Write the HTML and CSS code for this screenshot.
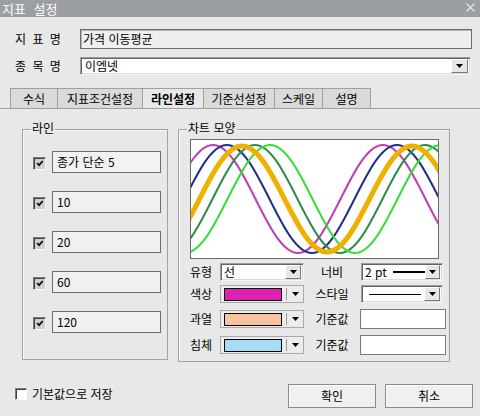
FILE: index.html
```html
<!DOCTYPE html>
<html lang="ko">
<head>
<meta charset="utf-8">
<title>지표 설정</title>
<link rel="stylesheet" href="styles.css">
</head>
<body>
<div class="titlebar">
  <span class="title">지표 설정</span>
  <svg class="close" width="9" height="9" viewBox="0 0 9 9"><path d="M0.5 0.5L8.5 8.5M8.5 0.5L0.5 8.5" stroke="#e8e8e8" stroke-width="1.1" fill="none"/></svg>
</div>

<div class="row r1">
  <span class="lbl">지 표 명</span>
  <div class="field">가격 이동평균</div>
</div>
<div class="row r2">
  <span class="lbl">종 목 명</span>
  <div class="combo wide">
    <span class="ctext">이엠넷</span>
    <span class="dbtn"><svg width="7" height="4" viewBox="0 0 7 4"><path d="M0 0H7L3.5 4Z" fill="#000"/></svg></span>
  </div>
</div>

<div class="tabs">
  <div class="tab t1">수식</div>
  <div class="tab t2">지표조건설정</div>
  <div class="tab t3 active">라인설정</div>
  <div class="tab t4">기준선설정</div>
  <div class="tab t5">스케일</div>
  <div class="tab t6">설명</div>
</div>

<div class="panels">
  <div class="group gleft">
    <div class="gtitle">라인</div>
    <div class="lines">
      <div class="lrow"><span class="cb checked"><svg width="11" height="11" viewBox="0 0 11 11"><path d="M2.5 5L4.5 7.5L8.5 2.8" stroke="#000" stroke-width="1.8" fill="none"/></svg></span><div class="tb sel">종가 단순 5</div></div>
      <div class="lrow"><span class="cb checked"><svg width="11" height="11" viewBox="0 0 11 11"><path d="M2.5 5L4.5 7.5L8.5 2.8" stroke="#000" stroke-width="1.8" fill="none"/></svg></span><div class="tb">10</div></div>
      <div class="lrow"><span class="cb checked"><svg width="11" height="11" viewBox="0 0 11 11"><path d="M2.5 5L4.5 7.5L8.5 2.8" stroke="#000" stroke-width="1.8" fill="none"/></svg></span><div class="tb">20</div></div>
      <div class="lrow"><span class="cb checked"><svg width="11" height="11" viewBox="0 0 11 11"><path d="M2.5 5L4.5 7.5L8.5 2.8" stroke="#000" stroke-width="1.8" fill="none"/></svg></span><div class="tb">60</div></div>
      <div class="lrow"><span class="cb checked"><svg width="11" height="11" viewBox="0 0 11 11"><path d="M2.5 5L4.5 7.5L8.5 2.8" stroke="#000" stroke-width="1.8" fill="none"/></svg></span><div class="tb">120</div></div>
    </div>
  </div>

  <div class="group gright">
    <div class="gtitle">차트 모양</div>
    <div class="chart">
      <svg width="247" height="118" viewBox="0 0 247 118">
        <g fill="none" stroke-linecap="butt">
          <path stroke="#c23bb3" stroke-width="2" d="M -148 5 C -117 5 -94 113 -63 113 S -9 5 22 5 S 76 113 107 113 S 161 5 192 5 S 246 113 277 113"/>
          <path stroke="#1f2d8c" stroke-width="2" d="M -134 5 C -103 5 -80 113 -49 113 S 5 5 36 5 S 90 113 121 113 S 175 5 206 5 S 260 113 291 113"/>
          <path stroke="#2e8b4e" stroke-width="2" d="M -106 5 C -75 5 -52 113 -21 113 S 33 5 64 5 S 118 113 149 113 S 203 5 234 5 S 288 113 319 113"/>
          <path stroke="#36dd36" stroke-width="2" d="M -91 5 C -60 5 -37 113 -6 113 S 48 5 79 5 S 133 113 164 113 S 218 5 249 5 S 303 113 334 113"/>
          <path stroke="#f0b000" stroke-width="5" d="M -119 6 C -88 6 -65 112 -34 112 S 20 6 51 6 S 105 112 136 112 S 190 6 221 6 S 275 112 306 112"/>
        </g>
      </svg>
    </div>
    <div class="props">
      <span class="plbl">유형</span>
      <div class="combo c84"><span class="ctext">선</span><span class="dbtn"><svg width="7" height="4" viewBox="0 0 7 4"><path d="M0 0H7L3.5 4Z" fill="#000"/></svg></span></div>
      <span class="plbl2">너비</span>
      <div class="combo c82"><span class="ctext">2 pt</span><span class="sline thick"></span><span class="dbtn"><svg width="7" height="4" viewBox="0 0 7 4"><path d="M0 0H7L3.5 4Z" fill="#000"/></svg></span></div>

      <span class="plbl">색상</span>
      <div class="ccombo"><span class="swatch" style="background:#dd1fb2"></span><span class="sep"></span><svg width="7" height="4" viewBox="0 0 7 4"><path d="M0 0H7L3.5 4Z" fill="#000"/></svg></div>
      <span class="plbl2">스타일</span>
      <div class="combo c82"><span class="sline thin"></span><span class="dbtn"><svg width="7" height="4" viewBox="0 0 7 4"><path d="M0 0H7L3.5 4Z" fill="#000"/></svg></span></div>

      <span class="plbl">과열</span>
      <div class="ccombo"><span class="swatch" style="background:#f8c4a0"></span><span class="sep"></span><svg width="7" height="4" viewBox="0 0 7 4"><path d="M0 0H7L3.5 4Z" fill="#000"/></svg></div>
      <span class="plbl2">기준값</span>
      <div class="input"></div>

      <span class="plbl">침체</span>
      <div class="ccombo"><span class="swatch" style="background:#a8dcf4"></span><span class="sep"></span><svg width="7" height="4" viewBox="0 0 7 4"><path d="M0 0H7L3.5 4Z" fill="#000"/></svg></div>
      <span class="plbl2">기준값</span>
      <div class="input"></div>
    </div>
  </div>
</div>

<div class="footer">
  <span class="cb white"></span>
  <span class="flabel">기본값으로 저장</span>
  <button class="btn ok">확인</button>
  <button class="btn cancel">취소</button>
</div>
</body>
</html>
```

FILE: styles.css
```css
html, body {
  margin: 0;
  padding: 0;
}
body {
  width: 480px;
  height: 416px;
  overflow: hidden;
  background: #e8e8e8;
  color: #000;
  font-family: "Noto Sans CJK KR", "Liberation Sans", sans-serif;
  font-size: 12px;
  line-height: 14px;
}

/* title bar */
.titlebar {
  height: 17px;
  background: #9b9ea2;
  color: #fff;
  display: flex;
  justify-content: space-between;
  align-items: flex-start;
  padding: 0 5px 0 2px;
  font-size: 13px;
  line-height: 17px;
}
.title {
  word-spacing: 4px;
}
.close {
  margin-top: 3px;
}

/* top rows */
.row {
  display: flex;
  align-items: center;
  padding-left: 15px;
}
.lbl {
  width: 65px;
  word-spacing: 3px;
}
.r1 {
  margin-top: 12px;
  height: 20px;
}
.r2 {
  margin-top: 8px;
  height: 18px;
}
.field {
  box-sizing: border-box;
  width: 392px;
  height: 20px;
  border: 1px solid #6e6e6e;
  box-shadow: inset 1px 1px 0 #b4b4b4;
  background: #efefef;
  padding-left: 2px;
  line-height: 18px;
}

/* combo boxes */
.combo {
  box-sizing: border-box;
  display: flex;
  align-items: center;
  background: #fff;
  border: 1px solid;
  border-color: #9c9c9c #f4f4f4 #f4f4f4 #9c9c9c;
  box-shadow: inset 1px 1px 0 #646464, inset -1px -1px 0 #dcdcdc;
  padding: 0 2px 0 3px;
}
.combo.wide {
  width: 391px;
  height: 18px;
  padding-left: 4px;
}
.ctext {
  flex: 0 0 auto;
  line-height: 14px;
}
.dbtn {
  box-sizing: border-box;
  margin-left: auto;
  width: 16px;
  height: 14px;
  display: flex;
  align-items: center;
  justify-content: center;
  background: #e6e6e6;
  border: 1px solid;
  border-color: #fff #7a7a7a #7a7a7a #fff;
}
.combo.wide .dbtn {
  width: 17px;
}

/* tabs */
.tabs {
  margin-top: 13px;
  display: flex;
  padding-left: 10px;
  height: 20px;
  border-bottom: 1px solid #a0a0a0;
}
.tab {
  box-sizing: border-box;
  height: 20px;
  border: 1px solid #a0a0a0;
  border-right: none;
  border-bottom: none;
  background: #dadada;
  text-align: center;
  line-height: 19px;
}
.tab.t6 {
  border-right: 1px solid #a0a0a0;
}
.tab.active {
  background: #e8e8e8;
  font-weight: bold;
}
.t1 { width: 47px; }
.t2 { width: 85px; }
.t3 { width: 61px; }
.t4 { width: 71px; }
.t5 { width: 48px; }
.t6 { width: 49px; }

/* group boxes */
.panels {
  display: flex;
  align-items: flex-start;
  gap: 10px;
  margin-top: 20px;
  padding-left: 22px;
}
.group {
  box-sizing: border-box;
  border: 1px solid #a2a2a2;
  box-shadow: inset 1px 1px 0 #f8f8f8;
}
.gleft {
  width: 146px;
  height: 231px;
}
.gright {
  width: 272px;
  height: 233px;
}
.gtitle {
  width: max-content;
  margin: -9px 0 0 8px;
  padding: 0 1px;
  background: #e8e8e8;
  height: 14px;
  line-height: 14px;
}

/* line list */
.lines {
  display: flex;
  flex-direction: column;
  gap: 18px;
  margin-top: 16px;
}
.lrow {
  display: flex;
  align-items: center;
  height: 22px;
  padding-left: 10px;
}
.cb {
  box-sizing: border-box;
  width: 13px;
  height: 13px;
  border: 1px solid;
  border-color: #7c7c7c #fcfcfc #fcfcfc #7c7c7c;
  box-shadow: inset 1px 1px 0 #404040;
  display: flex;
  align-items: center;
  justify-content: center;
}
.cb.checked {
  background: #cfcfcf;
  margin-top: 2px;
}
.cb svg {
  margin: 1px 0 0 1px;
}
.tb {
  box-sizing: border-box;
  width: 109px;
  height: 22px;
  margin-left: 6px;
  border: 1px solid #6c6c6c;
  background: #f0f0f0;
  padding-left: 4px;
  line-height: 20px;
}
.tb.sel {
  background: repeating-conic-gradient(#fbfbfb 0 25%, #e9e9e9 0 50%) 0 0 / 2px 2px;
}

/* chart */
.chart {
  width: 249px;
  height: 120px;
  box-sizing: border-box;
  margin: 4px 0 0 11px;
  border: 1px solid #6a6a6a;
  background: #fff;
  overflow: hidden;
}
.chart svg {
  display: block;
}

/* property grid */
.props {
  display: grid;
  grid-template-columns: 30px 84px 56px 86px;
  grid-template-rows: 22px 25px 26px 20px;
  align-items: start;
  margin: 4px 0 0 11px;
}
.plbl {
  line-height: 18px;
  height: 18px;
}
.plbl2 {
  text-align: center;
  line-height: 18px;
  height: 18px;
}
.combo.c84 {
  width: 84px;
  height: 18px;
}
.combo.c82 {
  width: 82px;
  height: 18px;
  margin-left: 1px;
}
.sline {
  display: block;
  background: #000;
}
.sline.thick {
  width: 34px;
  height: 2px;
  margin-left: 6px;
}
.sline.thin {
  width: 52px;
  height: 1px;
  margin-left: 4px;
}
.ccombo {
  box-sizing: border-box;
  width: 84px;
  height: 18px;
  display: flex;
  align-items: center;
  border: 1px solid #a9a9a9;
  background: #ececec;
  padding-left: 3px;
}
.swatch {
  box-sizing: border-box;
  width: 58px;
  height: 13px;
  border: 1px solid #000;
  margin-top: 1px;
}
.sep {
  width: 1px;
  height: 12px;
  background: #9a9a9a;
  margin: 0 5px 0 4px;
}
.input {
  box-sizing: border-box;
  width: 86px;
  height: 20px;
  background: #fff;
  border: 1px solid #7a7a7a;
  margin-top: -1px;
}

/* footer */
.footer {
  display: flex;
  align-items: flex-start;
  margin-top: 22px;
  padding: 0 7px 0 15px;
}
.cb.white {
  width: 12px;
  height: 12px;
  background: #fff;
  margin-top: 4px;
}
.flabel {
  margin-left: 5px;
  margin-top: 3px;
  line-height: 14px;
}
.btn {
  box-sizing: border-box;
  width: 88px;
  height: 24px;
  background: #f0f0f0;
  border: 1px solid #8a8a8a;
  box-shadow: inset 1px 1px 0 #fff;
  font-family: inherit;
  font-size: 12px;
  color: #000;
  padding: 0;
  line-height: 22px;
}
.btn.ok {
  margin-left: auto;
}
.btn.cancel {
  margin-left: 9px;
}
```
